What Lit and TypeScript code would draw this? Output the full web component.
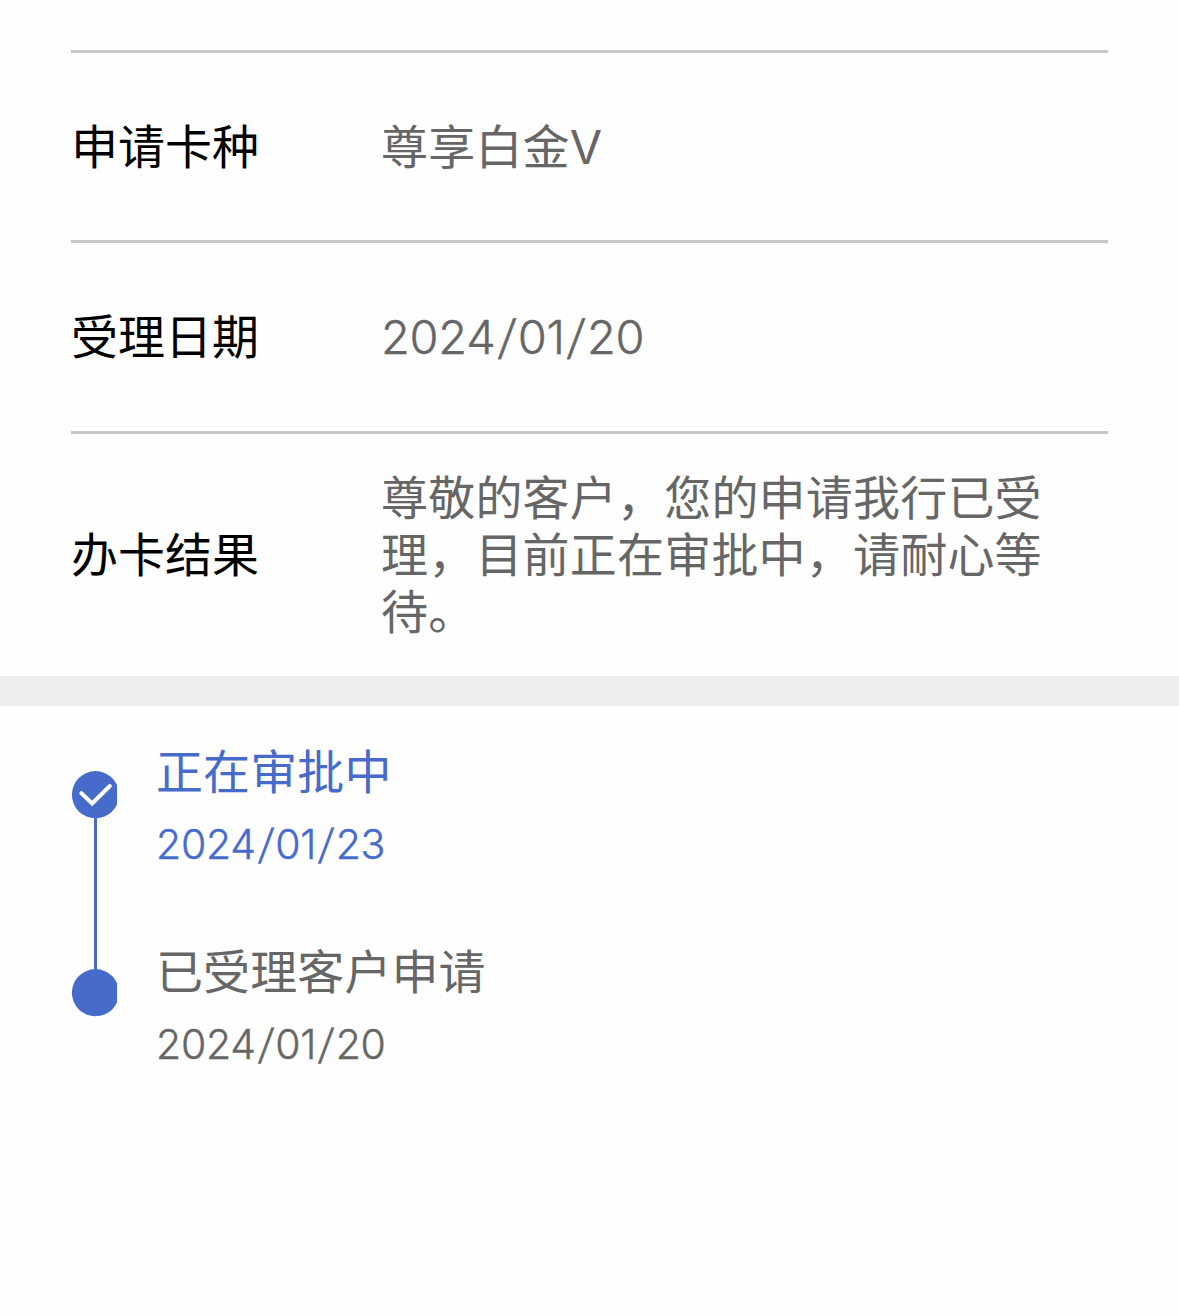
import { LitElement, html, css, svg } from 'lit';
import { customElement, property } from 'lit/decorators.js';

const details = [
  { label: '申请卡种', value: '尊享白金V' },
  { label: '受理日期', value: '2024/01/20', date: true },
  { label: '办卡结果', value: '尊敬的客户，您的申请我行已受理，目前正在审批中，请耐心等待。' },
];

const steps = [
  { title: '正在审批中', date: '2024/01/23', active: true },
  { title: '已受理客户申请', date: '2024/01/20', active: false },
];

@customElement('slash-date')
export class SlashDate extends LitElement {
  @property({ type: String }) value = '';

  static styles = css`
    :host {
      display: block;
      font-weight: 300;
      letter-spacing: -0.006em;
      -webkit-text-stroke: 0.4px currentColor;
    }

    .slash {
      display: inline-block;
      margin: 0 0.066em;
      transform: skewX(-6deg);
    }
  `;

  render() {
    return this.value
      .split('/')
      .map((part, i) => (i ? html`<span class="slash">/</span>${part}` : html`${part}`));
  }
}

@customElement('status-step')
export class StatusStep extends LitElement {
  @property({ type: String }) name = '';
  @property({ type: String }) date = '';
  @property({ type: Boolean, reflect: true }) active = false;

  static styles = css`
    :host {
      display: flex;
      height: 200px;
      color: #666;
    }

    :host([active]) {
      color: #466bcb;
    }

    .rail {
      display: flex;
      flex-direction: column;
      width: 46px;
      padding-top: 27px;
      box-sizing: border-box;
    }

    :host([active]) .rail {
      padding-top: 29px;
    }

    .dot {
      display: block;
      flex: none;
      width: 46px;
      height: 48px;
    }

    .line {
      flex: 1;
      width: 3px;
      margin: -1px 0 -28px 23px;
      background-color: #466bcb;
    }

    .body {
      margin-left: 39px;
    }

    .title {
      height: 60px;
      line-height: 60px;
      font-size: 47px;
      letter-spacing: 0.1px;
    }

    .date {
      margin-top: 12px;
      height: 60px;
      line-height: 60px;
      font-size: 41px;
    }
  `;

  render() {
    return html`
      <div class="rail">
        <svg class="dot" viewBox="0 0 46 48">
          <circle cx="24.5" cy="23.7" r="23.6" fill="#466bcb" />
          ${this.active
            ? svg`<path d="M10.4 22.2 L21.2 32.4 L38.8 15" fill="none" stroke="#fff" stroke-width="4" stroke-linecap="round" />`
            : ''}
        </svg>
        ${this.active ? html`<div class="line"></div>` : ''}
      </div>
      <div class="body">
        <div class="title">${this.name}</div>
        <slash-date class="date" .value=${this.date}></slash-date>
      </div>
    `;
  }
}

@customElement('app-root')
export class AppRoot extends LitElement {
  static styles = css`
    :host {
      display: block;
      min-height: 1316px;
      padding-top: 50px;
      box-sizing: border-box;
      background-color: #fefefe;
      font-family: Inter, 'Noto Sans CJK SC', sans-serif;
      font-size: 47px;
    }

    .details {
      margin: 0 71px;
    }

    .row {
      display: flex;
      align-items: center;
      height: 187px;
      padding-bottom: 1px;
      border-top: 3px solid #c8c8c8;
      line-height: 57px;
      letter-spacing: 0.2px;
    }

    .row:first-child {
      height: 186px;
    }

    .row:last-child {
      height: 241px;
    }

    .label {
      width: 310px;
      letter-spacing: 0;
      color: #000;
    }

    .value {
      width: 680px;
      color: #666;
    }

    .divider {
      height: 30px;
      background-color: #ededed;
    }

    .steps {
      padding: 36px 71px 0;
    }
  `;

  render() {
    return html`
      <div class="details">
        ${details.map(
          (item) => html`
            <div class="row">
              <div class="label">${item.label}</div>
              <div class="value">
                ${item.date ? html`<slash-date .value=${item.value}></slash-date>` : item.value}
              </div>
            </div>
          `
        )}
      </div>
      <div class="divider"></div>
      <div class="steps">
        ${steps.map(
          (step) => html`<status-step .name=${step.title} .date=${step.date} ?active=${step.active}></status-step>`
        )}
      </div>
    `;
  }
}
